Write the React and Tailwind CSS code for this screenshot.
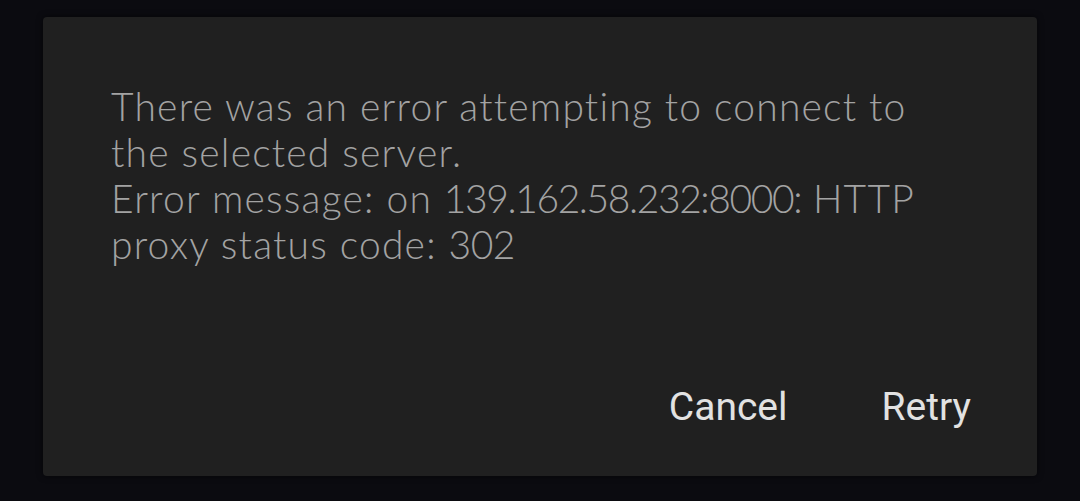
export default function App() {
  return (
    <div className="h-[501px] w-[1080px] bg-[#0b0b10] px-[43px] pt-[17px] pb-[25px]">
      <div className="flex h-full flex-col rounded-[4px] bg-[#202020] shadow-[0_0_6px_rgba(0,0,0,0.6)]">
        <div
          className="px-[68px] pt-[66px] text-[39px] leading-[46px] tracking-[1.2px] text-[#a3a3a3] font-light"
          style={{ fontFamily: "Lato, 'Open Sans', sans-serif" }}
        >
          <p>There was an error attempting to connect to</p>
          <p>the selected server.</p>
          <p>
            Error message: on <span className="tracking-[-1.4px]">139.162.58.232:8000:</span> HTTP
          </p>
          <p>
            proxy status code: <span className="tracking-[-0.5px]">302</span>
          </p>
        </div>
        <div
          className="mt-auto flex justify-end gap-[94px] pr-[66px] pb-[46px] text-[39px] leading-[46px] text-[#e2e2e2]"
          style={{ fontFamily: "Roboto, sans-serif" }}
        >
          <button>Cancel</button>
          <button>Retry</button>
        </div>
      </div>
    </div>
  );
}
